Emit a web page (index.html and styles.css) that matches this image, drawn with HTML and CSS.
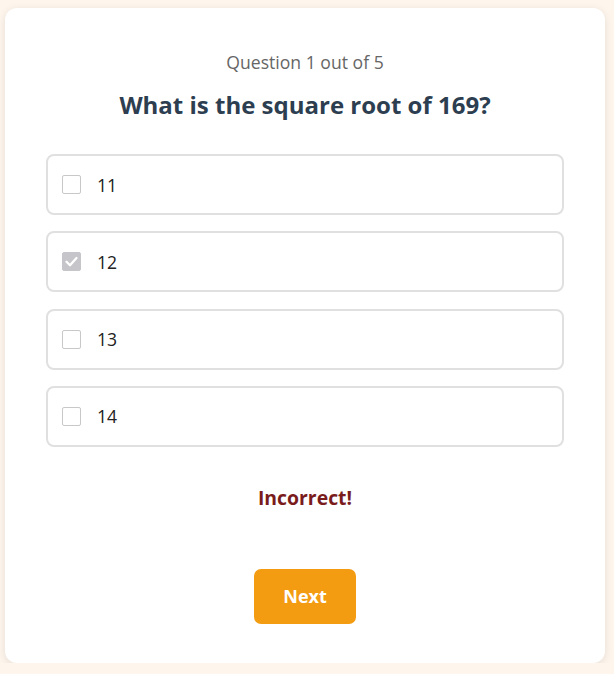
FILE: index.html
```html
<!DOCTYPE html>
<html>
<head>
<meta charset="utf-8">
<link rel="stylesheet" href="styles.css">
</head>
<body>
<div class="card">
  <div class="counter">Question 1 out of 5</div>
  <h1 class="question">What is the square root of 169?</h1>
  <div class="options">
    <label class="option"><span class="box"></span><span class="label">11</span></label>
    <label class="option"><span class="box checked"><svg viewBox="0 0 19 19" width="19" height="19"><path d="M4.5 9.8 L8 13.2 L14.5 6" fill="none" stroke="#fff" stroke-width="2.3" stroke-linecap="round" stroke-linejoin="round"/></svg></span><span class="label">12</span></label>
    <label class="option"><span class="box"></span><span class="label">13</span></label>
    <label class="option"><span class="box"></span><span class="label">14</span></label>
  </div>
  <div class="result">Incorrect!</div>
  <div class="actions"><button class="next">Next</button></div>
</div>
</body>
</html>
```
FILE: styles.css
```css
html, body {
  margin: 0;
  padding: 0;
  background: #fef6ec;
  font-family: "Open Sans", "Noto Sans", sans-serif;
}
.card {
  width: 600px;
  box-sizing: border-box;
  margin: 8px 0 0 5px;
  background: #fff;
  border-radius: 12px;
  box-shadow: 0 2px 8px rgba(0,0,0,0.10);
  padding: 42px 41px 39px 41px;
}
.counter {
  text-align: center;
  font-size: 17.6px;
  line-height: 24px;
  color: #666;
}
.question {
  margin: 14px 0 32px;
  text-align: center;
  font-size: 24px;
  line-height: 34px;
  font-weight: 700;
  color: #2c3e50;
}
.options {
  display: flex;
  flex-direction: column;
  gap: 16.3px;
}
.option {
  display: flex;
  align-items: center;
  height: 61px;
  box-sizing: border-box;
  border: 2px solid #e0e0e0;
  border-radius: 8px;
  padding: 0 14px;
  gap: 16px;
}
.box {
  width: 19px;
  height: 19px;
  box-sizing: border-box;
  border: 1px solid #c8c8c8;
  border-radius: 2px;
  background: #fff;
  display: flex;
}
.box.checked {
  background: #c6c6ca;
  border-color: #c6c6ca;
}
.box svg {
  margin: -1px;
}
.label {
  font-size: 17.6px;
  color: #222;
}
.result {
  margin-top: 38px;
  text-align: center;
  font-size: 19.4px;
  line-height: 26px;
  font-weight: 700;
  color: #7a1c1c;
}
.actions {
  margin-top: 58px;
  display: flex;
  justify-content: center;
}
.next {
  width: 102px;
  height: 55px;
  border: none;
  border-radius: 7px;
  background: #f39c12;
  color: #fff;
  font-family: inherit;
  font-size: 18px;
  font-weight: 700;
}
```
